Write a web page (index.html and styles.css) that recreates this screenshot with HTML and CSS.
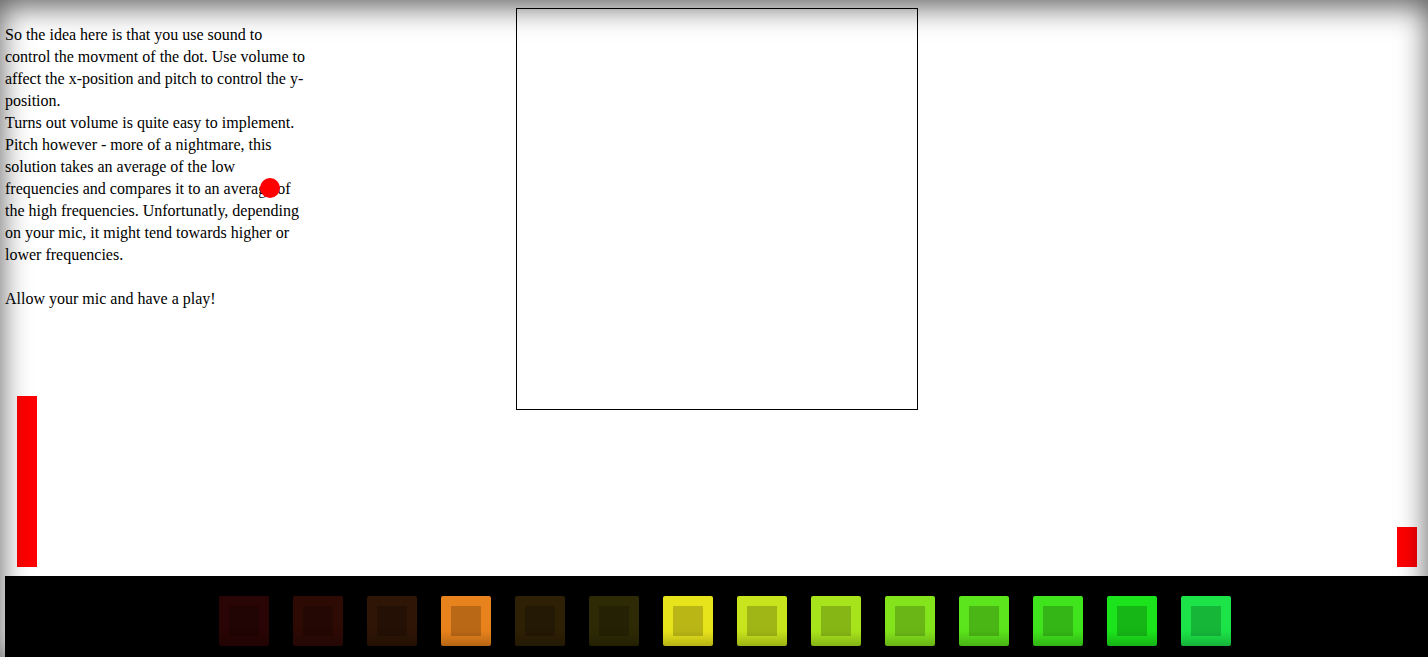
FILE: index.html
```html
<!DOCTYPE html>
<html>
<head>
<meta charset="utf-8">
<link rel="stylesheet" href="styles.css">
</head>
<body>
<div class="stage">
  <div class="col-left">
    <p class="intro">So the idea here is that you use sound to control the movment of the dot. Use volume to affect the x-position and pitch to control the y-position.<br>Turns out volume is quite easy to implement. Pitch however - more of a nightmare, this solution takes an average of the low frequencies and compares it to an average of the high frequencies. Unfortunatly, depending on your mic, it might tend towards higher or lower frequencies.<br><br>Allow your mic and have a play!</p>
    <div class="bar bar-left"></div>
  </div>
  <div class="col-mid">
    <div class="canvas"></div>
  </div>
  <div class="col-right">
    <div class="bar bar-right"></div>
  </div>
</div>
<div class="dot"></div>
<div class="footer">
  <div class="sq" style="--c:#2a0505"><span></span></div>
  <div class="sq" style="--c:#2e0a05"><span></span></div>
  <div class="sq" style="--c:#2e1506"><span></span></div>
  <div class="sq" style="--c:#e8821c"><span></span></div>
  <div class="sq" style="--c:#2e2005"><span></span></div>
  <div class="sq" style="--c:#2e2a05"><span></span></div>
  <div class="sq" style="--c:#e8e41c"><span></span></div>
  <div class="sq" style="--c:#c8e41c"><span></span></div>
  <div class="sq" style="--c:#a8e41c"><span></span></div>
  <div class="sq" style="--c:#84e41c"><span></span></div>
  <div class="sq" style="--c:#5ce41c"><span></span></div>
  <div class="sq" style="--c:#40e41c"><span></span></div>
  <div class="sq" style="--c:#1ce41c"><span></span></div>
  <div class="sq" style="--c:#1ce448"><span></span></div>
</div>
<div class="vignette"></div>
</body>
</html>
```

FILE: styles.css
```css
html, body {
  margin: 0;
  padding: 0;
  background: #fff;
  overflow: hidden;
}
body {
  font-family: "Liberation Serif", "Times New Roman", serif;
  font-size: 16px;
  line-height: 22px;
  color: #000;
  padding-left: 5px;
  height: 657px;
}
.stage {
  display: grid;
  grid-template-columns: 1fr auto 1fr;
  height: 576px;
}
.col-left {
  display: flex;
  flex-direction: column;
}
.intro {
  margin: 24px 0 0 0;
  width: 305px;
}
.bar {
  background: #ff0000;
  width: 20px;
  margin-top: auto;
  margin-bottom: 9px;
}
.bar-left {
  height: 171px;
  margin-left: 12px;
}
.col-right {
  display: flex;
  flex-direction: column;
  align-items: flex-end;
}
.bar-right {
  height: 40px;
  margin-right: 11px;
}
.col-mid {
  padding-top: 8px;
}
.canvas {
  width: 400px;
  height: 400px;
  border: 1px solid #000;
}
.dot {
  position: absolute;
  left: 260px;
  top: 178px;
  width: 20px;
  height: 20px;
  border-radius: 50%;
  background: #ff0000;
}
.footer {
  background: #000;
  height: 81px;
  display: flex;
  justify-content: center;
  align-items: flex-start;
  gap: 24px;
  padding: 20px 0 0 17px;
  box-sizing: border-box;
}
.sq {
  width: 50px;
  height: 50px;
  border-radius: 2px;
  background: linear-gradient(to bottom, var(--c) 70%, color-mix(in srgb, var(--c) 85%, #000));
  display: flex;
  align-items: center;
  justify-content: center;
}
.sq span {
  width: 30px;
  height: 30px;
  background: rgba(0, 0, 0, 0.2);
}
.vignette {
  position: fixed;
  inset: 0;
  pointer-events: none;
  box-shadow: inset 0 6px 30px rgba(0, 0, 0, 0.65);
}
```
